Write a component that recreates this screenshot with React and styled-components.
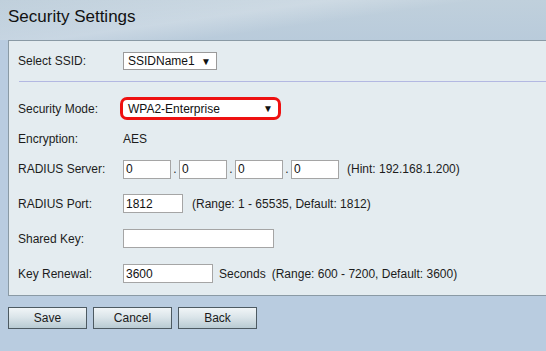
import React from "react";
import styled, { createGlobalStyle } from "styled-components";

const GlobalStyle = createGlobalStyle`
  html, body { margin: 0; padding: 0; }
  body {
    font-family: "Liberation Sans", Arial, sans-serif;
    font-size: 12px;
    color: #1c1c1c;
  }
`;

const Page = styled.div`
  width: 546px;
  height: 351px;
  overflow: hidden;
  background: #b9cce0;
  display: flex;
  flex-direction: column;
`;

const Header = styled.div`
  height: 40px;
  flex: none;
  display: flex;
  align-items: center;
  padding: 0 8px 6px;
  box-sizing: border-box;
  background:
    linear-gradient(172deg, rgba(255,255,255,0) 0%, rgba(255,255,255,0.22) 40%, rgba(255,255,255,0) 58%),
    linear-gradient(to bottom, #c0d0dc, #b9cbdb);
`;

const Title = styled.h1`
  margin: 0;
  font-size: 17px;
  font-weight: normal;
  color: #111;
`;

const Panel = styled.div`
  margin-left: 8px;
  margin-right: -4px;
  background: #e4ecf0;
  border: 1px solid #8a9aa5;
  border-right: none;
  padding: 0 0 4px 9px;
`;

const Row = styled.div`
  height: ${({ h }) => h}px;
  display: flex;
  align-items: center;
`;

const Label = styled.div`
  width: 105px;
  flex: none;
`;

const Separator = styled.div`
  height: 1px;
  background: #b3b8e2;
  margin: 0 0 9px 1px;
`;

const SelectBox = styled.div`
  width: ${({ w }) => w}px;
  height: 18px;
  box-sizing: border-box;
  background: #fff;
  border: 1px solid #9a9a9a;
  display: flex;
  align-items: center;
  justify-content: space-between;
  padding: 0 5px 0 4px;
  color: #111;
`;

const Arrow = styled.span`
  font-size: 10px;
  color: #111;
`;

const Highlight = styled.div`
  margin-left: -3px;
  width: 161px;
  height: 23px;
  box-sizing: border-box;
  border: 3px solid #ee1111;
  border-radius: 7px;
  background: #fff;
  display: flex;
  align-items: center;
  justify-content: space-between;
  padding: 0 5px 0 5px;
  color: #111;
`;

const Input = styled.div`
  width: ${({ w }) => w}px;
  height: 19px;
  flex: none;
  box-sizing: border-box;
  background: #fff;
  border: 1px solid #a5a5a5;
  padding: 0 2px;
  display: flex;
  align-items: center;
  color: #111;
`;

const Dot = styled.span`
  width: 8px;
  text-align: center;
  color: #1c1c1c;
`;

const Note = styled.span`
  margin-left: ${({ ml }) => ml}px;
  white-space: nowrap;
`;

const Buttons = styled.div`
  display: flex;
  gap: 6px;
  padding: 11px 8px 0;
`;

const Button = styled.button`
  width: 79px;
  height: 22px;
  border: 1px solid #4d5a62;
  background: linear-gradient(to bottom, #f1f5f7 0%, #dbe5ea 45%, #b9cbd3 100%);
  font-family: "Liberation Sans", Arial, sans-serif;
  font-size: 12px;
  color: #1a1a1a;
  padding: 0;
`;

export default function App() {
  return (
    <>
      <GlobalStyle />
      <Page>
        <Header>
          <Title>Security Settings</Title>
        </Header>
        <Panel>
          <Row h={40}>
            <Label>Select SSID:</Label>
            <SelectBox w={94}>
              SSIDName1 <Arrow>▼</Arrow>
            </SelectBox>
          </Row>
          <Separator />
          <Row h={35}>
            <Label>Security Mode:</Label>
            <Highlight>
              WPA2-Enterprise <Arrow>▼</Arrow>
            </Highlight>
          </Row>
          <Row h={26}>
            <Label>Encryption:</Label>
            <span>AES</span>
          </Row>
          <Row h={34}>
            <Label>RADIUS Server:</Label>
            <Input w={48}>0</Input>
            <Dot>.</Dot>
            <Input w={48}>0</Input>
            <Dot>.</Dot>
            <Input w={48}>0</Input>
            <Dot>.</Dot>
            <Input w={48}>0</Input>
            <Note ml={8}>(Hint: 192.168.1.200)</Note>
          </Row>
          <Row h={35}>
            <Label>RADIUS Port:</Label>
            <Input w={60}>1812</Input>
            <Note ml={9}>(Range: 1 - 65535, Default: 1812)</Note>
          </Row>
          <Row h={35}>
            <Label>Shared Key:</Label>
            <Input w={151} />
          </Row>
          <Row h={35}>
            <Label>Key Renewal:</Label>
            <Input w={90}>3600</Input>
            <Note ml={6}>Seconds</Note>
            <Note ml={6}>(Range: 600 - 7200, Default: 3600)</Note>
          </Row>
        </Panel>
        <Buttons>
          <Button>Save</Button>
          <Button>Cancel</Button>
          <Button>Back</Button>
        </Buttons>
      </Page>
    </>
  );
}
